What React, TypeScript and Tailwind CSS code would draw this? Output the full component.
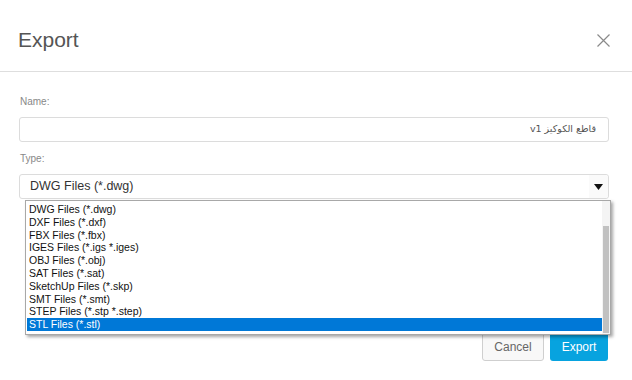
const types = [
  'DWG Files (*.dwg)',
  'DXF Files (*.dxf)',
  'FBX Files (*.fbx)',
  'IGES Files (*.igs *.iges)',
  'OBJ Files (*.obj)',
  'SAT Files (*.sat)',
  'SketchUp Files (*.skp)',
  'SMT Files (*.smt)',
  'STEP Files (*.stp *.step)',
  'STL Files (*.stl)',
];

export default function App() {
  return (
    <div className="w-[632px] h-[380px] bg-white font-['Liberation_Sans',Arial,sans-serif] overflow-hidden">
      {/* header */}
      <div className="h-[72px] pt-[8px] pl-[18px] pr-[22px] flex items-center justify-between border-b border-[#dedede]">
        <h2 className="text-[21px] leading-[24px] text-[#555]">Export</h2>
        <svg width="13" height="13" viewBox="0 0 13 13" className="mt-[1px]">
          <path d="M0.5 0.5L12.5 12.5M12.5 0.5L0.5 12.5" stroke="#8a8a8a" strokeWidth="1.2" fill="none" />
        </svg>
      </div>

      {/* body */}
      <div className="pl-[19px] pr-[23px] pt-[24px]">
        <div className="text-[10px] leading-[12px] text-[#888] pl-[1px] mb-[9px]">Name:</div>
        <div
          dir="rtl"
          className="h-[25px] border border-[#dcdcdc] rounded-[3px] flex items-center pr-[12px] text-[9.5px] text-[#555] font-['DejaVu_Sans',sans-serif]"
        >
          قاطع الكوكيز v1
        </div>

        <div className="text-[10px] leading-[12px] text-[#888] pl-[1px] mt-[11px] mb-[9px]">Type:</div>
        <div className="relative">
          <div className="h-[25px] border border-[#dcdcdc] rounded-[3px] flex items-center justify-between pl-[10px] text-[12.5px] text-[#333]">
            <span>DWG Files (*.dwg)</span>
            <div className="h-full w-[19px] flex items-center justify-center bg-[#fafafa] rounded-r-[3px]">
              <svg width="9" height="6" viewBox="0 0 9 6">
                <path d="M0 0H9L4.5 6Z" fill="#111" />
              </svg>
            </div>
          </div>

          {/* open native list */}
          <div className="absolute top-[26px] left-[6px] w-[586px] h-[135px] z-10 bg-white border border-[#a8a8a8] shadow-[2px_2px_3px_rgba(0,0,0,0.35)] flex">
            <div className="flex-1 pt-[2px] pl-[1px]">
              {types.map((t, i) => (
                <div
                  key={t}
                  className={
                    i === types.length - 1
                      ? 'h-[12.8px] leading-[12.8px] pl-[2px] text-[10.5px] bg-[#0078d7] text-white'
                      : 'h-[12.8px] leading-[12.8px] pl-[2px] text-[10.5px] text-[#111]'
                  }
                >
                  {t}
                </div>
              ))}
            </div>
            <div className="w-[8px] bg-[#f4f4f4] flex flex-col justify-end pb-[1px]">
              <div className="h-[107px] mx-[1px] bg-[#c1c1c1]" />
            </div>
          </div>
        </div>
      </div>

      {/* footer */}
      <div className="flex justify-end gap-[6px] pr-[24px] mt-[133px]">
        <button className="w-[62px] h-[29px] rounded-[3px] border border-[#cfcfcf] bg-[#f8f8f8] text-[12px] text-[#666]">
          Cancel
        </button>
        <button className="w-[58px] h-[29px] rounded-[3px] bg-[#07a3df] text-[12px] text-white">
          Export
        </button>
      </div>
    </div>
  );
}
